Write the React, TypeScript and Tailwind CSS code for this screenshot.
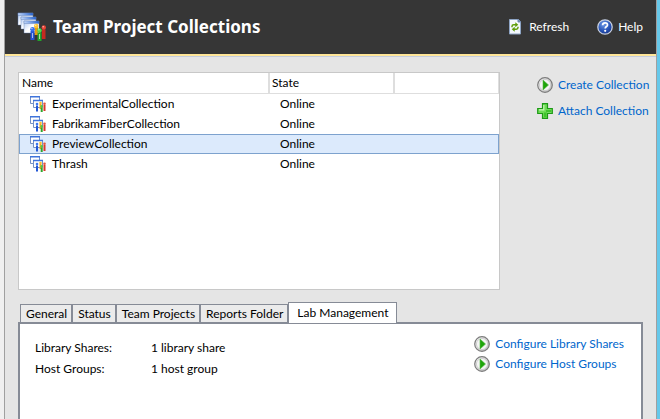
import React, { useState } from "react";
import clsx from "clsx";

const collections = [
  { name: "ExperimentalCollection", state: "Online" },
  { name: "FabrikamFiberCollection", state: "Online" },
  { name: "PreviewCollection", state: "Online" },
  { name: "Thrash", state: "Online" },
];

const tabs = [
  "General",
  "Status",
  "Team Projects",
  "Reports Folder",
  "Lab Management",
];

const labSettings = [
  { label: "Library Shares:", value: "1 library share" },
  { label: "Host Groups:", value: "1 host group" },
];

export default function App() {
  return (
    <div className="flex min-h-screen bg-[#f0f0f0] font-[Lato,'Open_Sans',sans-serif] text-[12px] leading-4 text-black">
      <div className="ml-1 flex min-w-0 flex-1 flex-col border-x border-[#a0a0a0] bg-[#e5e5e5]">
        <Header />
        <main className="flex flex-1 flex-col pt-[15px] pl-[13px]">
          <div className="flex items-start">
            <CollectionList />
            <nav className="ml-[37px] flex w-[119px] shrink-0 flex-col gap-[10px] pt-[5px]">
              <ActionLink icon={<PlayIcon />}>Create Collection</ActionLink>
              <ActionLink icon={<PlusIcon />}>Attach Collection</ActionLink>
            </nav>
          </div>
          <DetailTabs />
        </main>
      </div>
      <div className="w-[3px] bg-[#66c8ea]" />
    </div>
  );
}

// dark title bar
const Header = () => {
  return (
    <header className="border-b border-[#c3cde0]">
      <div className="flex h-14 items-center border-b-2 border-[#ffe699] bg-[#363636] pr-[13px] pl-3 text-white">
        <CollectionsLogo />
        <h1 className="ml-[6px] flex-1 font-['Noto_Sans','Open_Sans',sans-serif] text-[17px] font-bold">
          Team Project Collections
        </h1>
        <div className="flex gap-7">
          <button type="button" className="flex items-center gap-[5px]">
            <RefreshIcon />
            Refresh
          </button>
          <button type="button" className="flex items-center gap-[5px]">
            <HelpIcon />
            Help
          </button>
        </div>
      </div>
    </header>
  );
};

// list of collections with a selectable row
const CollectionList = () => {
  const [selected, setSelected] = useState("PreviewCollection");

  return (
    <div className="h-[218px] min-w-0 flex-1 border border-[#c8c8c8] bg-white">
      <table className="w-full table-fixed border-separate border-spacing-0 text-left">
        <thead>
          <tr className="h-[21px]">
            <th className="w-[251px] border-r-2 border-b border-[#dedede] pl-[3px] font-normal">
              Name
            </th>
            <th className="w-[125px] border-r-2 border-b border-[#dedede] pl-[2px] font-normal">
              State
            </th>
            <th className="border-r border-b border-[#dedede]" />
          </tr>
        </thead>
        <tbody>
          {collections.map(({ name, state }) => {
            const active = selected === name;
            const edge = active
              ? "border-[#7da2ce] bg-[#dceafc]"
              : "border-transparent";
            return (
              <tr key={name} className="h-5" onClick={() => setSelected(name)}>
                <td className={clsx("border-y border-l pl-[10px]", edge)}>
                  <div className="flex items-center gap-[6px]">
                    <CollectionIcon />
                    {name}
                  </div>
                </td>
                <td className={clsx("border-y pl-[10px]", edge)}>{state}</td>
                <td className={clsx("border-y border-r", edge)} />
              </tr>
            );
          })}
        </tbody>
      </table>
    </div>
  );
};

const DetailTabs = () => {
  const [current, setCurrent] = useState("Lab Management");

  return (
    <section className="mt-3 mr-[13px] flex flex-1 flex-col">
      <div role="tablist" className="z-10 -mb-[2px] flex items-end pl-[2px]">
        {tabs.map((tab) => (
          <button
            key={tab}
            type="button"
            role="tab"
            aria-selected={tab === current}
            onClick={() => setCurrent(tab)}
            className={clsx(
              "border border-[#868b96] whitespace-nowrap",
              tab === current
                ? "h-[22px] bg-white px-2"
                : "mb-[1px] h-[19px] bg-[#ebebeb] pr-1 pl-[5px]"
            )}
          >
            {tab}
          </button>
        ))}
      </div>
      <div
        role="tabpanel"
        className="flex flex-1 items-start justify-between border-2 border-b-0 border-[#868b96] bg-white pt-3 pr-[17px] pl-[15px]"
      >
        <dl className="mt-1 grid grid-cols-[116px_auto] gap-y-[5px]">
          {labSettings.map(({ label, value }) => (
            <React.Fragment key={label}>
              <dt>{label}</dt>
              <dd>{value}</dd>
            </React.Fragment>
          ))}
        </dl>
        <div className="flex flex-col gap-1">
          <ActionLink icon={<PlayIcon />}>Configure Library Shares</ActionLink>
          <ActionLink icon={<PlayIcon />}>Configure Host Groups</ActionLink>
        </div>
      </div>
    </section>
  );
};

const ActionLink = ({
  icon,
  children,
}: {
  icon: React.ReactNode;
  children: React.ReactNode;
}) => {
  return (
    <a
      href="#"
      className="flex items-center gap-[5px] whitespace-nowrap text-[#0066cc]"
    >
      {icon}
      {children}
    </a>
  );
};

// icons

const PlayIcon = () => (
  <svg className="h-4 w-4 shrink-0" viewBox="0 0 16 16">
    <defs>
      <linearGradient id="ring" x1="0" y1="0" x2="1" y2="1">
        <stop offset="0" stopColor="#fff" />
        <stop offset="1" stopColor="#b4b4b4" />
      </linearGradient>
    </defs>
    <circle cx="8" cy="8" r="7.3" fill="url(#ring)" stroke="#7b7b7b" strokeWidth="1.2" />
    <circle cx="8" cy="8" r="5.6" fill="#f4f4f4" stroke="#c9c9c9" strokeWidth="0.8" />
    <path d="M6 3v10l5.5-5z" fill="#1fa50a" stroke="#55b845" strokeWidth="0.6" />
  </svg>
);

const PlusIcon = () => (
  <svg className="h-4 w-4 shrink-0" viewBox="0 0 16 16">
    <path
      d="M5.5.7h5v4.8h4.8v5h-4.8v4.8h-5v-4.8H.7v-5h4.8z"
      fill="#6fdc56"
      stroke="#1d9a16"
      strokeWidth="1.2"
    />
    <path d="M6.8 2v4.8H2M9.2 9.2h4.8" fill="none" stroke="#c3f5b4" strokeWidth="1.2" />
    <path d="M9 7h5v2.5H9zM7 9.5h2.5v4.5H7z" fill="#3fc42c" />
  </svg>
);

const RefreshIcon = () => (
  <svg className="h-4 w-4 shrink-0" viewBox="0 0 16 16">
    <path d="M1.5.5h9l2 2.500v12h-11z" fill="#f3f7fc" stroke="#8ea4c4" />
    <path d="M10 .5V3h2.500z" fill="#6d87b0" stroke="#6d87b0" />
    <path
      d="M4 8.300V7.500c0-1 .7-1.700 1.700-1.700H8M10 7.800v.8c0 1-.7 1.700-1.700 1.700H6"
      fill="none"
      stroke="#5f9e0b"
      strokeWidth="1.5"
    />
    <path d="M7.300 3.300v5l3-2.500zM6.700 7.800v5l-3-2.500z" fill="#5f9e0b" />
  </svg>
);

const HelpIcon = () => (
  <svg className="h-4 w-4 shrink-0" viewBox="0 0 16 16">
    <defs>
      <radialGradient id="help" cx="0.4" cy="0.3" r="0.8">
        <stop offset="0" stopColor="#6f9be8" />
        <stop offset="0.6" stopColor="#2450b4" />
        <stop offset="1" stopColor="#16307c" />
      </radialGradient>
    </defs>
    <circle cx="8" cy="8" r="7.2" fill="url(#help)" stroke="#c7cfdf" strokeWidth="1.3" />
    <path
      d="M5.6 6.3c0-1.6 1-2.5 2.5-2.5s2.4.9 2.4 2.1c0 1.6-2.3 1.7-2.3 3.6"
      fill="none"
      stroke="#fff"
      strokeWidth="1.7"
    />
    <circle cx="8.2" cy="11.8" r="1.1" fill="#fff" />
  </svg>
);

const CollectionIcon = () => (
  <svg className="h-4 w-4 shrink-0" viewBox="0 0 16 16">
    <g fill="#fff" stroke="#7591c4">
      <path d="M.5.5h9v7h-9z" />
      <path d="M3.5 4.5h9v7h-9z" />
    </g>
    <path d="M0 .8h10M3 4.5h10" stroke="#3f74dc" strokeWidth="1.6" />
    <path d="M6 9.500h2v6H6z" fill="#2458d6" />
    <circle cx="7" cy="8" r="1.300" fill="#3e79ee" />
    <path d="M9.500 8h2v5h-2z" fill="#f0a818" />
    <circle cx="10.500" cy="7" r="1.300" fill="#f7bd2e" />
    <path d="M13.500 9h2v6h-2z" fill="#d83a2a" />
    <circle cx="14.500" cy="7.800" r="1.300" fill="#e4553f" />
    <path d="M10.700 11.500h2V16h-2z" fill="#2fa52e" />
    <circle cx="11.700" cy="10.200" r="1.300" fill="#54c748" />
  </svg>
);

const CollectionsLogo = () => (
  <svg className="h-[30px] w-[30px] shrink-0" viewBox="0 0 30 30">
    <defs>
      <linearGradient id="pane" x1="0" y1="0" x2="1" y2="1">
        <stop offset="0" stopColor="#a9c4f2" />
        <stop offset="0.5" stopColor="#fff" />
      </linearGradient>
      <linearGradient id="bar" x1="0" y1="0" x2="1" y2="0">
        <stop offset="0" stopColor="#c3d8fa" />
        <stop offset="1" stopColor="#2361cf" />
      </linearGradient>
    </defs>
    <g stroke="#5e7cb0" strokeWidth="0.4">
      <path d="M1 1h15v12H1z" fill="url(#pane)" />
      <path d="M1 1h15v2.5H1z" fill="url(#bar)" />
      <path d="M4 5h15v12H4z" fill="url(#pane)" />
      <path d="M4 5h15v2.5H4z" fill="url(#bar)" />
      <path d="M7 9h15v12H7z" fill="url(#pane)" />
      <path d="M7 9h15v2.5H7z" fill="url(#bar)" />
    </g>
    <path d="M17.500 15h3.500v8h-3.500z" fill="#e39a12" />
    <circle cx="19.200" cy="14" r="2.200" fill="#ffc42e" />
    <path d="M13.500 19h4v9h-4z" fill="#2453d4" />
    <circle cx="15.500" cy="17.300" r="2.300" fill="#3570ef" />
    <path d="M25 17.500h3.500V27H25z" fill="#c52a20" />
    <circle cx="26.800" cy="15.500" r="2.200" fill="#ec4535" />
    <path d="M20.500 20.500h4V29h-4z" fill="#22a52b" />
    <circle cx="22.500" cy="18.500" r="2.300" fill="#50d64a" />
    <g fill="#fff" opacity="0.6">
      <circle cx="14.900" cy="16.500" r="0.8" />
      <circle cx="18.700" cy="13.200" r="0.8" />
      <circle cx="21.900" cy="17.700" r="0.8" />
      <circle cx="26.200" cy="14.800" r="0.8" />
      <path d="M15 21h1v5h-1zM22 22h1v5h-1z" />
    </g>
  </svg>
);
